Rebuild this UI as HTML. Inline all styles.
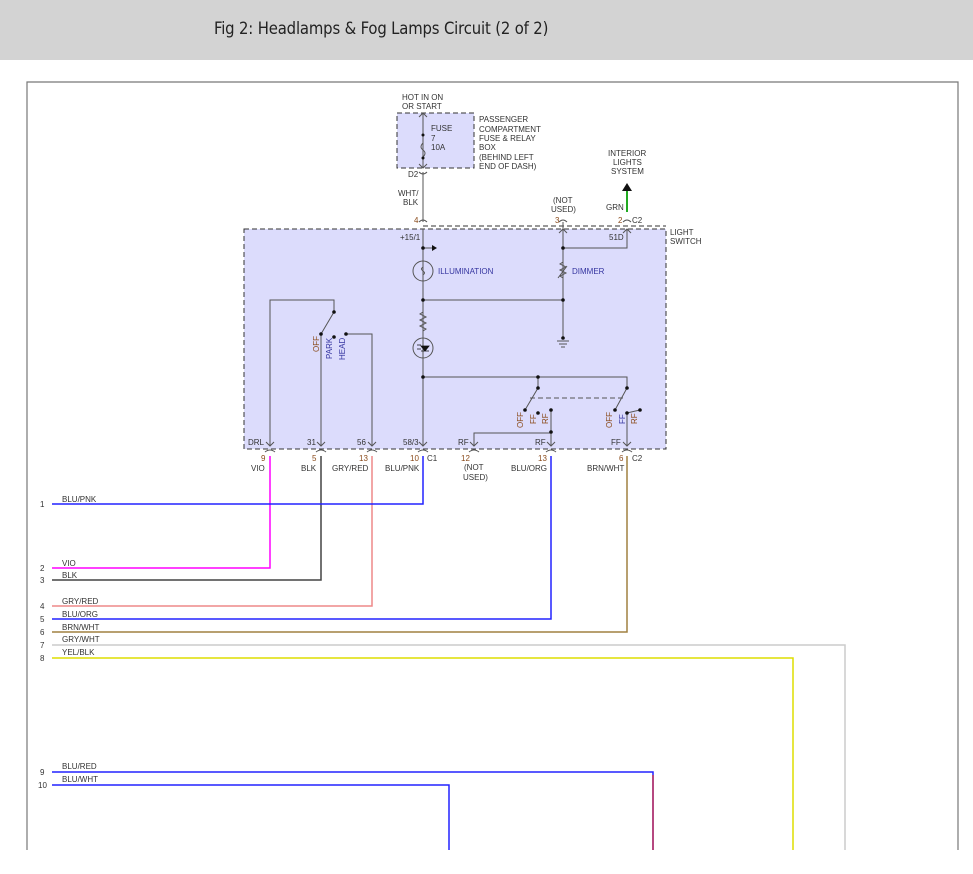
<!DOCTYPE html>
<html><head><meta charset="utf-8"><style>
html,body{margin:0;padding:0;background:#fff;}
body{width:973px;height:874px;overflow:hidden;position:relative;font-family:"Liberation Sans",sans-serif;}
.hdr{position:absolute;left:0;top:0;width:973px;height:60px;background:#d3d3d3;}
.hdr span{position:absolute;left:214px;top:19px;font-size:16.5px;letter-spacing:-0.15px;color:#222;font-family:"DejaVu Sans Condensed","Liberation Sans",sans-serif;}
svg{position:absolute;left:0;top:0;}
text{font-family:"Liberation Sans",sans-serif;font-size:8px;fill:#333;}
.o{fill:#8a4a1a;}
.b{fill:#3535a0;}
</style></head><body>
<div class="hdr"><span>Fig 2: Headlamps &amp; Fog Lamps Circuit (2 of 2)</span></div>
<svg width="973" height="874" viewBox="0 0 973 874">
<path d="M27 850V82H958V850" fill="none" stroke="#777" stroke-width="1.2"/>
<rect x="397" y="113" width="77" height="55" fill="#dcdcfc" stroke="#333" stroke-dasharray="5,3"/>
<rect x="244" y="229" width="422" height="220" fill="#dcdcfc" stroke="#333" stroke-dasharray="5,3"/>
<path d="M423 226H666" stroke="#333" stroke-dasharray="5,3"/>
<g fill="none" stroke="#555" stroke-width="1">
<path d="M423 113V168M423 172V222M423 229V446"/>
<path d="M419 117L423 113L427 117M419 164L423 168L427 164M419 172Q423 176 427 172M419 222Q423 218 427 222"/>
<path d="M423 143q-4 4 0 7q4 3 0 7"/>
<path d="M563 222V300V338M563 248H627V229"/>
<path d="M559 222Q563 218 567 222M623 222Q627 218 631 222M559 233L563 229L567 233M623 233L627 229L631 233"/>
<path d="M423 248H432"/>
<circle cx="423" cy="271" r="10"/>
<path d="M423 263v4q-3 2 0 4q3 2 0 4v4"/>
<path d="M563 262l-3 2l6 3l-6 3l6 3l-6 3l3 2M558 278l9-12"/>
<path d="M423 300H563"/>
<path d="M423 312l-3 2l6 3l-6 3l6 3l-6 3l6 3l-3 2"/>
<circle cx="423" cy="348" r="10"/>
<path d="M557 341h12M559 344h8M561 347h4"/>
<path d="M423 377H627V388M538 377V388"/>
<path d="M270 446V300H334V312L321 334V446M346 334H372V446"/>
<path d="M538 388L525 410M627 388L615 410"/>
<path d="M530 398H625" stroke-dasharray="5,3"/>
<path d="M551 410V446M474 446V433H551M627 413V446M627 413L640 410"/>
<path d="M266 442l4 4l4-4M317 442l4 4l4-4M368 442l4 4l4-4M419 442l4 4l4-4M470 442l4 4l4-4M547 442l4 4l4-4M623 442l4 4l4-4"/>
<path d="M265 452q5-4 10 0M316 452q5-4 10 0M367 452q5-4 10 0M418 452q5-4 10 0M469 452q5-4 10 0M546 452q5-4 10 0M622 452q5-4 10 0"/>
</g>
<path d="M627 212V190" stroke="#2a2" stroke-width="2"/>
<path d="M622 191L627 183L632 191Z" fill="#111"/>
<path d="M432 245L437 248L432 251Z" fill="#111"/>
<path d="M417 345h4M417 349h4M421 351h8M425 351l-4-5h8z" stroke="#111" fill="#111" stroke-width="0.8"/>
<g fill="#111">
<circle cx="423" cy="135" r="1.5"/><circle cx="423" cy="158" r="1.5"/>
<circle cx="423" cy="248" r="1.8"/><circle cx="423" cy="300" r="1.8"/><circle cx="563" cy="300" r="1.8"/><circle cx="563" cy="248" r="1.8"/><circle cx="563" cy="338" r="1.8"/>
<circle cx="334" cy="312" r="1.8"/><circle cx="321" cy="334" r="1.8"/><circle cx="334" cy="337" r="1.8"/><circle cx="346" cy="334" r="1.8"/>
<circle cx="423" cy="377" r="1.8"/><circle cx="538" cy="377" r="1.8"/><circle cx="538" cy="388" r="1.8"/><circle cx="525" cy="410" r="1.8"/><circle cx="538" cy="413" r="1.8"/><circle cx="551" cy="410" r="1.8"/><circle cx="551" cy="432" r="1.8"/>
<circle cx="627" cy="388" r="1.8"/><circle cx="615" cy="410" r="1.8"/><circle cx="627" cy="413" r="1.8"/><circle cx="640" cy="410" r="1.8"/>
</g>
<g fill="none" stroke-width="1.5">
<path d="M270 456V568H52" stroke="#f0f"/>
<path d="M321 456V580H52" stroke="#444"/>
<path d="M372 456V606H52" stroke="#e88"/>
<path d="M423 456V504H52" stroke="#22f"/>
<path d="M551 456V619H52" stroke="#22f"/>
<path d="M627 456V632H52" stroke="#a08040"/>
<path d="M52 645H845V850" stroke="#ccc"/>
<path d="M52 658H793V850" stroke="#dd0"/>
<path d="M52 772H653V850" stroke="#22f"/>
<path d="M653 775V850" stroke="#d00" stroke-width="1"/>
<path d="M52 785H449V850" stroke="#22f"/>
</g>
<text x="402" y="100">HOT IN ON</text><text x="402" y="109">OR START</text>
<text x="431" y="131">FUSE</text><text x="431" y="141">7</text><text x="431" y="150">10A</text>
<text x="479" y="122">PASSENGER</text><text x="479" y="132">COMPARTMENT</text><text x="479" y="141">FUSE &amp; RELAY</text><text x="479" y="150">BOX</text><text x="479" y="160">(BEHIND LEFT</text><text x="479" y="169">END OF DASH)</text>
<text x="408" y="177">D2</text>
<text x="398" y="196">WHT/</text><text x="403" y="205">BLK</text>
<text class="o" x="414" y="223">4</text><text class="o" x="555" y="223">3</text><text class="o" x="618" y="223">2</text><text x="632" y="223">C2</text>
<text x="553" y="203">(NOT</text><text x="551" y="212">USED)</text>
<text x="606" y="210">GRN</text>
<text x="608" y="156">INTERIOR</text><text x="613" y="165">LIGHTS</text><text x="611" y="174">SYSTEM</text>
<text x="670" y="235">LIGHT</text><text x="670" y="244">SWITCH</text>
<text x="400" y="240">+15/1</text><text x="609" y="240">51D</text>
<text class="b" x="438" y="274">ILLUMINATION</text><text class="b" x="572" y="274">DIMMER</text>
<text class="o" transform="translate(319,352) rotate(-90)">OFF</text>
<text class="b" transform="translate(332,359) rotate(-90)">PARK</text>
<text class="b" transform="translate(345,360) rotate(-90)">HEAD</text>
<text class="o" transform="translate(523,428) rotate(-90)">OFF</text>
<text class="o" transform="translate(536,424) rotate(-90)">FF</text>
<text class="o" transform="translate(548,424) rotate(-90)">RF</text>
<text class="o" transform="translate(612,428) rotate(-90)">OFF</text>
<text class="b" transform="translate(625,424) rotate(-90)">FF</text>
<text class="o" transform="translate(637,424) rotate(-90)">RF</text>
<text x="248" y="445">DRL</text><text x="307" y="445">31</text><text x="357" y="445">56</text><text x="403" y="445">58/3</text><text x="458" y="445">RF</text><text x="535" y="445">RF</text><text x="611" y="445">FF</text>
<text class="o" x="261" y="461">9</text><text class="o" x="312" y="461">5</text><text class="o" x="359" y="461">13</text><text class="o" x="410" y="461">10</text><text x="427" y="461">C1</text><text class="o" x="461" y="461">12</text><text class="o" x="538" y="461">13</text><text class="o" x="619" y="461">6</text><text x="632" y="461">C2</text>
<text x="251" y="471">VIO</text><text x="301" y="471">BLK</text><text x="332" y="471">GRY/RED</text><text x="385" y="471">BLU/PNK</text><text x="464" y="470">(NOT</text><text x="463" y="480">USED)</text><text x="511" y="471">BLU/ORG</text><text x="587" y="471">BRN/WHT</text>
<text x="40" y="507">1</text><text x="62" y="502">BLU/PNK</text>
<text x="40" y="571">2</text><text x="62" y="566">VIO</text>
<text x="40" y="583">3</text><text x="62" y="578">BLK</text>
<text x="40" y="609">4</text><text x="62" y="604">GRY/RED</text>
<text x="40" y="622">5</text><text x="62" y="617">BLU/ORG</text>
<text x="40" y="635">6</text><text x="62" y="630">BRN/WHT</text>
<text x="40" y="648">7</text><text x="62" y="642">GRY/WHT</text>
<text x="40" y="661">8</text><text x="62" y="655">YEL/BLK</text>
<text x="40" y="775">9</text><text x="62" y="769">BLU/RED</text>
<text x="38" y="788">10</text><text x="62" y="782">BLU/WHT</text>
</svg>
</body></html>
